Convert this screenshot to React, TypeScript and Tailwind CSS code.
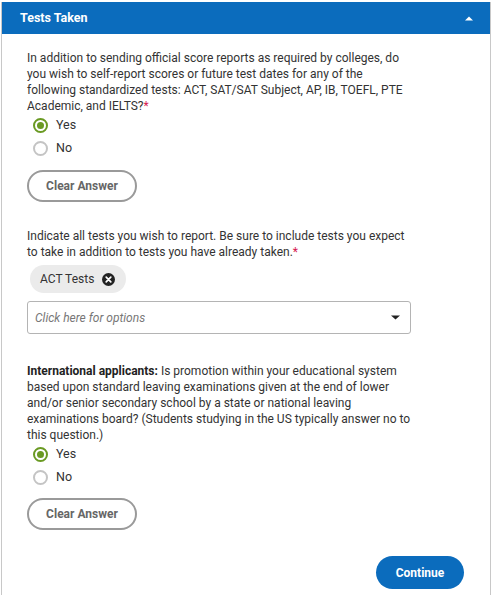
import React from "react";

function Radio({ label, checked }: { label: string; checked?: boolean }) {
  return (
    <label className="flex h-[23px] items-center">
      <span
        className={
          "ml-[6px] flex h-[15px] w-[15px] items-center justify-center rounded-full border-2 " +
          (checked ? "border-[#6a9a23]" : "border-[#c4c4c4]")
        }
      >
        {checked && <span className="h-[7px] w-[7px] rounded-full bg-[#6a9a23]" />}
      </span>
      <span className="ml-[8px] text-[12.5px] text-[#333]">{label}</span>
    </label>
  );
}

function ClearButton() {
  return (
    <button className="flex h-[32px] w-[110px] items-center justify-center rounded-full border-2 border-[#9a9a9a] bg-white text-[12px] font-bold text-[#666]">
      Clear Answer
    </button>
  );
}

export default function App() {
  return (
    <div className="min-h-[595px] bg-white pt-[2px] pl-[1px]" style={{ fontFamily: "Roboto, 'Liberation Sans', sans-serif" }}>
      <div className="w-[490px] border-x border-[#c8c8c8]">
        <div className="flex h-[32px] items-center justify-between bg-[#0b6cbd] pl-[18px] pr-[17px]">
          <h2 className="text-[12.5px] font-bold text-white">Tests Taken</h2>
          <svg width="8" height="5" viewBox="0 0 8 5" aria-hidden="true">
            <path d="M0 4.5L4 0.5L8 4.5Z" fill="white" />
          </svg>
        </div>

        <div className="pl-[25px] pr-[26px] pt-[16px] pb-[7px]">
          <div className="w-[384px]">
            <p className="text-[12px] leading-[16px] text-[#333]">
              In addition to sending official score reports as required by colleges, do you wish to self-report scores or future test dates for any of the following standardized tests: ACT, SAT/SAT Subject, AP, IB, TOEFL, PTE Academic, and IELTS?
              <span className="text-[#d6184f]">*</span>
            </p>
            <div className="flex flex-col">
              <Radio label="Yes" checked />
              <Radio label="No" />
            </div>
            <div className="mt-[10px]">
              <ClearButton />
            </div>

            <p className="mt-[26px] text-[12px] leading-[16px] text-[#333]">
              Indicate all tests you wish to report. Be sure to include tests you expect to take in addition to tests you have already taken.
              <span className="text-[#d6184f]">*</span>
            </p>
            <div className="mt-[5px] pl-[3px]">
              <span className="inline-flex h-[28px] items-center gap-[8px] rounded-full bg-[#ebebeb] pl-[10px] pr-[11px] text-[12px] text-[#333]">
                ACT Tests
                <svg width="13" height="13" viewBox="0 0 13 13" aria-hidden="true">
                  <circle cx="6.5" cy="6.5" r="6.5" fill="#222" />
                  <path d="M4.2 4.2L8.8 8.8M8.8 4.2L4.2 8.8" stroke="white" strokeWidth="1.7" strokeLinecap="round" />
                </svg>
              </span>
            </div>
            <div className="mt-[8px] flex h-[33px] items-center justify-between rounded-[3px] border border-[#b4b4b4] pl-[7px] pr-[10px]">
              <span className="text-[12px] italic text-[#777]">Click here for options</span>
              <svg width="9" height="5" viewBox="0 0 9 5" aria-hidden="true">
                <path d="M0 0.5L4.5 4.5L9 0.5Z" fill="#222" />
              </svg>
            </div>

            <p className="mt-[29px] text-[12px] leading-[16px] text-[#333]">
              <span className="font-bold text-[#222]">International applicants:</span> Is promotion within your educational system based upon standard leaving examinations given at the end of lower and/or senior secondary school by a state or national leaving examinations board? (Students studying in the US typically answer no to this question.)
            </p>
            <div className="flex flex-col">
              <Radio label="Yes" checked />
              <Radio label="No" />
            </div>
            <div className="mt-[9px]">
              <ClearButton />
            </div>
          </div>

          <div className="mt-[26px] flex justify-end">
            <button className="h-[33px] w-[88px] rounded-full bg-[#0b6cbd] text-[12px] font-bold text-white">
              Continue
            </button>
          </div>
        </div>
      </div>
    </div>
  );
}
